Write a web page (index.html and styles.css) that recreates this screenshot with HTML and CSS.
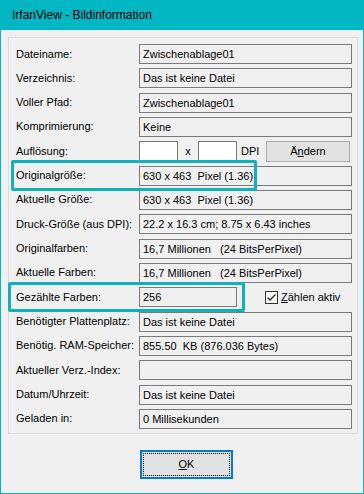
FILE: index.html
```html
<!DOCTYPE html>
<html lang="de">
<head>
    <meta charset="UTF-8">
    <title>Bildinformation</title>
    <link rel="stylesheet" href="styles.css">
</head>
<body>

<div class="window">
    <div class="titlebar">IrfanView - Bildinformation</div>

    <div class="client">
        <div class="group">
            <span class="lbl">Dateiname:</span>
            <span class="val">Zwischenablage01</span>

            <span class="lbl">Verzeichnis:</span>
            <span class="val">Das ist keine Datei</span>

            <span class="lbl">Voller Pfad:</span>
            <span class="val">Zwischenablage01</span>

            <span class="lbl">Komprimierung:</span>
            <span class="val">Keine</span>

            <span class="lbl">Auflösung:</span>
            <div class="aufl">
                <span class="edit"></span>
                <span class="mal">x</span>
                <span class="edit"></span>
                <span class="dpi">DPI</span>
                <button class="btn">Ä<u>n</u>dern</button>
            </div>

            <span class="lbl">Originalgröße:</span>
            <span class="val">630 x 463  Pixel (1.36)</span>

            <span class="lbl">Aktuelle Größe:</span>
            <span class="val">630 x 463  Pixel (1.36)</span>

            <span class="lbl">Druck-Größe (aus DPI):</span>
            <span class="val">22.2 x 16.3 cm; 8.75 x 6.43 inches</span>

            <span class="lbl">Originalfarben:</span>
            <span class="val">16,7 Millionen   (24 BitsPerPixel)</span>

            <span class="lbl">Aktuelle Farben:</span>
            <span class="val">16,7 Millionen   (24 BitsPerPixel)</span>

            <span class="lbl">Gezählte Farben:</span>
            <div class="zaehl">
                <span class="val kurz">256</span>
                <span class="check">
                    <svg width="13" height="13" viewBox="0 0 13 13">
                        <rect x="0.5" y="0.5" width="12" height="12" fill="#fff" stroke="#333"/>
                        <path d="M2.5 6.5 L5 9 L10.5 3.5" fill="none" stroke="#222" stroke-width="1.3"/>
                    </svg>
                </span>
                <span><u>Z</u>ählen aktiv</span>
            </div>

            <span class="lbl">Benötigter Plattenplatz:</span>
            <span class="val">Das ist keine Datei</span>

            <span class="lbl">Benötig. RAM-Speicher:</span>
            <span class="val">855.50  KB (876.036 Bytes)</span>

            <span class="lbl">Aktueller Verz.-Index:</span>
            <span class="val"></span>

            <span class="lbl">Datum/Uhrzeit:</span>
            <span class="val">Das ist keine Datei</span>

            <span class="lbl">Geladen in:</span>
            <span class="val">0 Millisekunden</span>
        </div>

        <div class="knoepfe">
            <button class="ok"><span class="fokus"><u>O</u>K</span></button>
        </div>
    </div>

    <!-- Markierungen -->
    <div class="markierung m1"></div>
    <div class="markierung m2"></div>
</div>

</body>
</html>
```

FILE: styles.css
```css
body{
    margin: 0;
    background: #f0f0f0;
}

.window{
    position: relative;
    width: 364px;
    height: 494px;
    box-sizing: border-box;
    background: #f0f0f0;
    border: 1px solid #00b7c3;
    border-top: none;
    font-family: "Liberation Sans", Arial, sans-serif;
    font-size: 11px;
    color: #000;
}

.titlebar{
    height: 30px;
    margin: 0 -1px;
    padding-left: 12px;
    background: #00b7c3;
    font-size: 12px;
    line-height: 30px;
    color: #000;
}

.client{
    padding: 7px 6px 0 7px;
}

.group{
    display: grid;
    grid-template-columns: 123px 213px;
    grid-auto-rows: 20px;
    row-gap: 4.33px;
    padding: 6px 0 4px 7px;
    border: 1px solid #dcdcdc;
    width: 341px;
}

.lbl{
    align-self: center;
    white-space: nowrap;
    margin-top: -1px;
}

.val{
    box-sizing: border-box;
    border: 1px solid #7a7a7a;
    padding-left: 3px;
    line-height: 18px;
    white-space: pre;
    overflow: hidden;
}

.aufl, .zaehl{
    display: flex;
    align-items: center;
}

.edit{
    box-sizing: border-box;
    width: 39px;
    height: 20px;
    background: #fff;
    border: 1px solid #7a7a7a;
}

.mal{
    width: 20px;
    text-align: center;
}

.dpi{
    margin-left: 4px;
}

.btn{
    margin-left: auto;
    margin-right: 2px;
    width: 84px;
    height: 21px;
    padding: 0;
    background: #e1e1e1;
    border: 1px solid #adadad;
    font: inherit;
    color: #000;
}

.kurz{
    width: 98px;
    height: 20px;
}

.check{
    display: flex;
    margin-left: 28px;
    margin-right: 3px;
}

.knoepfe{
    padding: 16px 0 0 132px;
}

.ok{
    display: flex;
    width: 93px;
    height: 29px;
    padding: 1px;
    background: #e1e1e1;
    border: 2px solid #0078d7;
    font: inherit;
    color: #000;
}

.fokus{
    flex: 1;
    display: flex;
    align-items: center;
    justify-content: center;
    border: 1px dotted #000;
}

.markierung{
    position: absolute;
    border: 3px solid #0fb1bf;
    border-radius: 2px;
}

.m1{
    left: 10px;
    top: 160px;
    width: 240px;
    height: 25px;
}

.m2{
    left: 7px;
    top: 282px;
    width: 231px;
    height: 24px;
}
```
